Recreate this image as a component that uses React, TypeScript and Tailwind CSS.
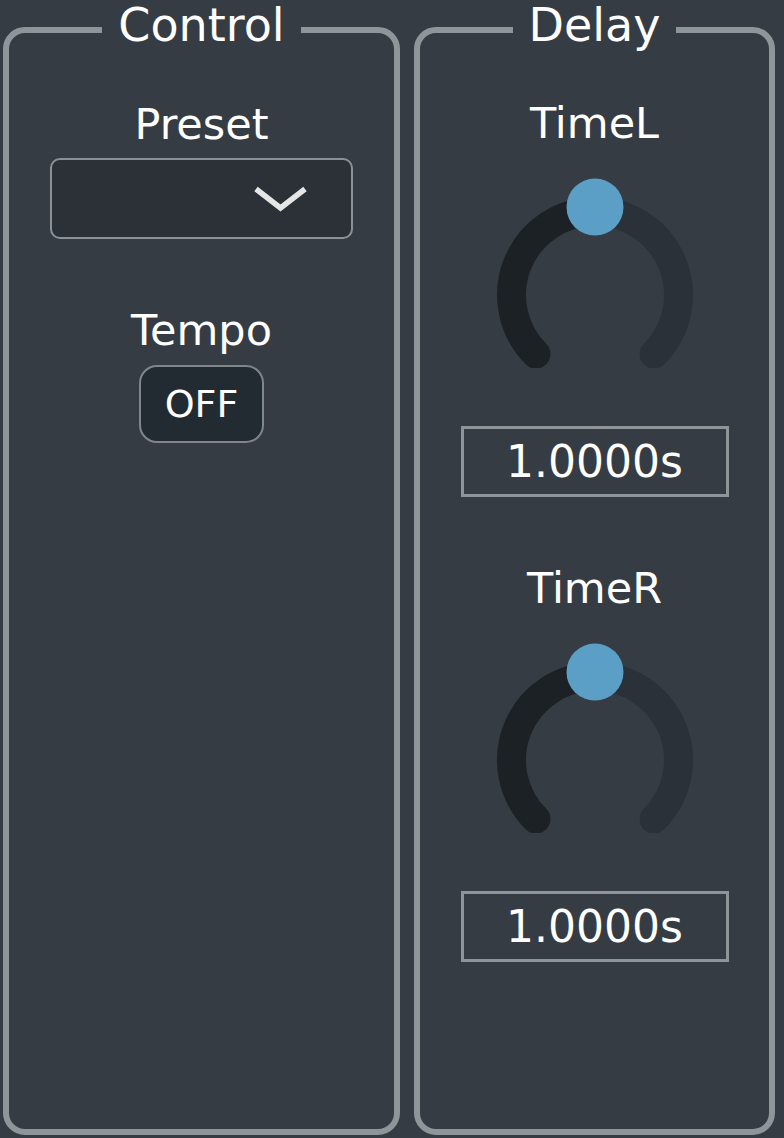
import React from 'react';

const font = { fontFamily: '"DejaVu Sans", Verdana, sans-serif' };

function Knob() {
  // 270° arc, value at the centre (top)
  const cx = 100;
  const cy = 117;
  const r = 83.5;
  const d = r * Math.SQRT1_2;
  return (
    <svg width="200" height="190" viewBox="0 0 200 190" className="block">
      <path
        d={`M ${cx + 0.01} ${cy - r} A ${r} ${r} 0 0 1 ${cx + d} ${cy + d}`}
        fill="none"
        stroke="#2a3138"
        strokeWidth="29"
        strokeLinecap="round"
      />
      <path
        d={`M ${cx - d} ${cy + d} A ${r} ${r} 0 0 1 ${cx} ${cy - r}`}
        fill="none"
        stroke="#1c2125"
        strokeWidth="29"
        strokeLinecap="round"
      />
      <circle cx={cx} cy="29" r="28.5" fill="#5b9fc6" />
    </svg>
  );
}

function KnobGroup({ label, value, first }: { label: string; value: string; first?: boolean }) {
  return (
    <div className={`flex flex-col items-center ${first ? 'mt-[42px]' : 'mt-[70px]'}`}>
      <div className="text-[43px] leading-none text-white">{label}</div>
      <div className="mt-[33px]">
        <Knob />
      </div>
      <div className="mt-[58px] w-[268px] h-[71px] border-[3px] border-[#8d9599] flex items-center justify-center text-[44px] leading-none text-white">
        {value}
      </div>
    </div>
  );
}

export default function App() {
  return (
    <div className="w-[784px] h-[1138px] bg-[#363c43] flex gap-[14px] pl-[3px]" style={font}>
      <fieldset className="w-[397px] h-[1135px] border-[6px] border-[#8e969a] rounded-[22px]">
        <legend className="mx-auto px-4 pt-[2px] pb-[12px] text-[46px] leading-none text-white">Control</legend>
        <div className="flex flex-col items-center">
          <div className="mt-[43px] text-[43px] leading-none text-white">Preset</div>
          <div className="mt-[12px] w-[303px] h-[81px] rounded-[10px] border-2 border-[#8a9296] bg-[#2b3137] flex items-center justify-end pr-[43px]">
            <svg width="55" height="28" viewBox="0 0 55 28">
              <polyline points="3,4 27.5,23 52,4" fill="none" stroke="#e6e6e6" strokeWidth="5.5" />
            </svg>
          </div>
          <div className="mt-[70px] text-[43px] leading-none text-white">Tempo</div>
          <div className="mt-[13px] w-[125px] h-[78px] rounded-[18px] border-2 border-[#7f878b] bg-[#232b32] flex items-center justify-center text-[38px] leading-none text-white">
            OFF
          </div>
        </div>
      </fieldset>
      <fieldset className="w-[361px] h-[1135px] border-[6px] border-[#8e969a] rounded-[22px]">
        <legend className="mx-auto px-4 pt-[2px] pb-[12px] text-[46px] leading-none text-white">Delay</legend>
        <div className="flex flex-col items-center">
          <KnobGroup label="TimeL" value="1.0000s" first />
          <KnobGroup label="TimeR" value="1.0000s" />
        </div>
      </fieldset>
    </div>
  );
}
